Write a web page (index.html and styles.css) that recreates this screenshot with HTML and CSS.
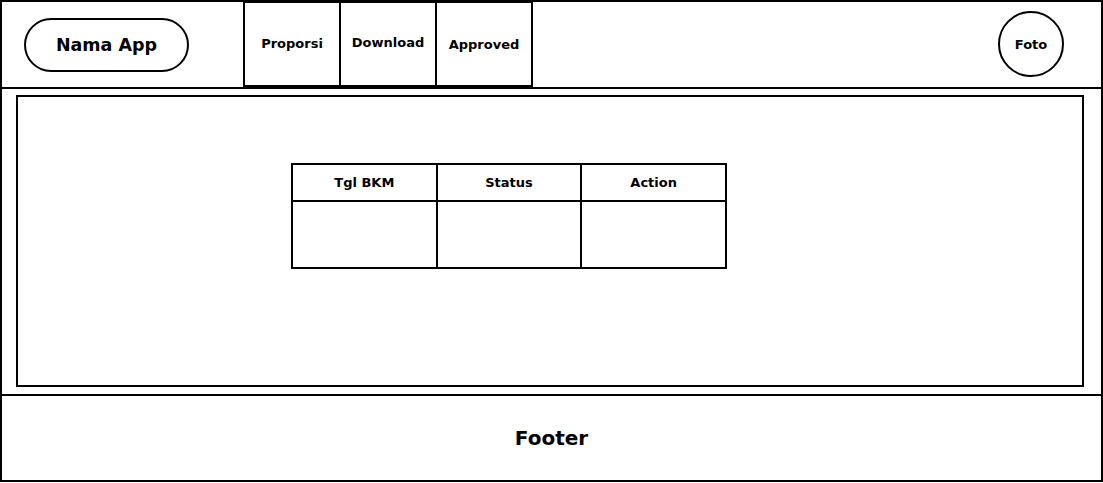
FILE: index.html
```html
<!DOCTYPE html>
<html lang="en">
<head>
    <meta charset="UTF-8">
    <meta name="viewport" content="width=device-width, initial-scale=1.0">
    <title>Nama App</title>
    <link rel="stylesheet" href="styles.css">
</head>
<body>
    <div class="frame">
        <header class="header">
            <div class="brand">Nama App</div>
            <nav class="nav">
                <a class="nav-item">Proporsi</a>
                <a class="nav-item up">Download</a>
                <a class="nav-item down">Approved</a>
            </nav>
            <div class="avatar">Foto</div>
        </header>

        <main class="main">
            <div class="content">
                <div class="table">
                    <div class="cell head">Tgl BKM</div>
                    <div class="cell head">Status</div>
                    <div class="cell head">Action</div>
                    <div class="cell"></div>
                    <div class="cell"></div>
                    <div class="cell"></div>
                </div>
            </div>
        </main>

        <footer class="footer">Footer</footer>
    </div>
</body>
</html>
```

FILE: styles.css
```css
* {
    margin: 0;
    padding: 0;
    box-sizing: border-box;
    font-family: 'DejaVu Sans', sans-serif;
}

body {
    background-color: #fff;
    color: #000;
}

.frame {
    width: 1103px;
    height: 482px;
    border: 2px solid #000;
    display: flex;
    flex-direction: column;
}

.header {
    height: 87px;
    border-bottom: 2px solid #000;
    display: flex;
    align-items: center;
    padding: 0 37px 0 22px;
}

.brand {
    width: 165px;
    height: 54px;
    border: 2px solid #000;
    border-radius: 27px;
    display: flex;
    align-items: center;
    justify-content: center;
    font-weight: bold;
    font-size: 17.5px;
    margin-top: 1px;
}

.nav {
    display: flex;
    align-self: stretch;
    margin-left: 54px;
    margin-top: -1px;
}

.nav-item {
    width: 98px;
    border: 2px solid #000;
    display: flex;
    align-items: center;
    justify-content: center;
    font-size: 13px;
    font-weight: bold;
    margin-left: -2px;
    padding-bottom: 1px;
}

.nav-item:first-child {
    margin-left: 0;
}

.nav-item.up {
    padding-bottom: 3px;
}

.nav-item.down {
    padding-bottom: 0;
    padding-top: 1px;
}

.avatar {
    margin-left: auto;
    margin-top: -1px;
    width: 66px;
    height: 66px;
    border: 2px solid #000;
    border-radius: 50%;
    display: flex;
    align-items: center;
    justify-content: center;
    font-size: 13px;
    font-weight: bold;
}

.main {
    height: 307px;
    border-bottom: 2px solid #000;
    padding: 6px 17px 7px 14px;
}

.content {
    height: 100%;
    border: 2px solid #000;
    padding: 66px 0 0 273px;
}

.table {
    width: 436px;
    display: grid;
    grid-template-columns: repeat(3, 1fr);
    grid-template-rows: 37px 67px;
    border-left: 2px solid #000;
    border-top: 2px solid #000;
}

.cell {
    border-right: 2px solid #000;
    border-bottom: 2px solid #000;
}

.cell.head {
    display: flex;
    align-items: center;
    justify-content: center;
    font-size: 13px;
    font-weight: bold;
}

.footer {
    flex: 1;
    display: flex;
    align-items: center;
    justify-content: center;
    font-size: 20px;
    font-weight: bold;
}
```
